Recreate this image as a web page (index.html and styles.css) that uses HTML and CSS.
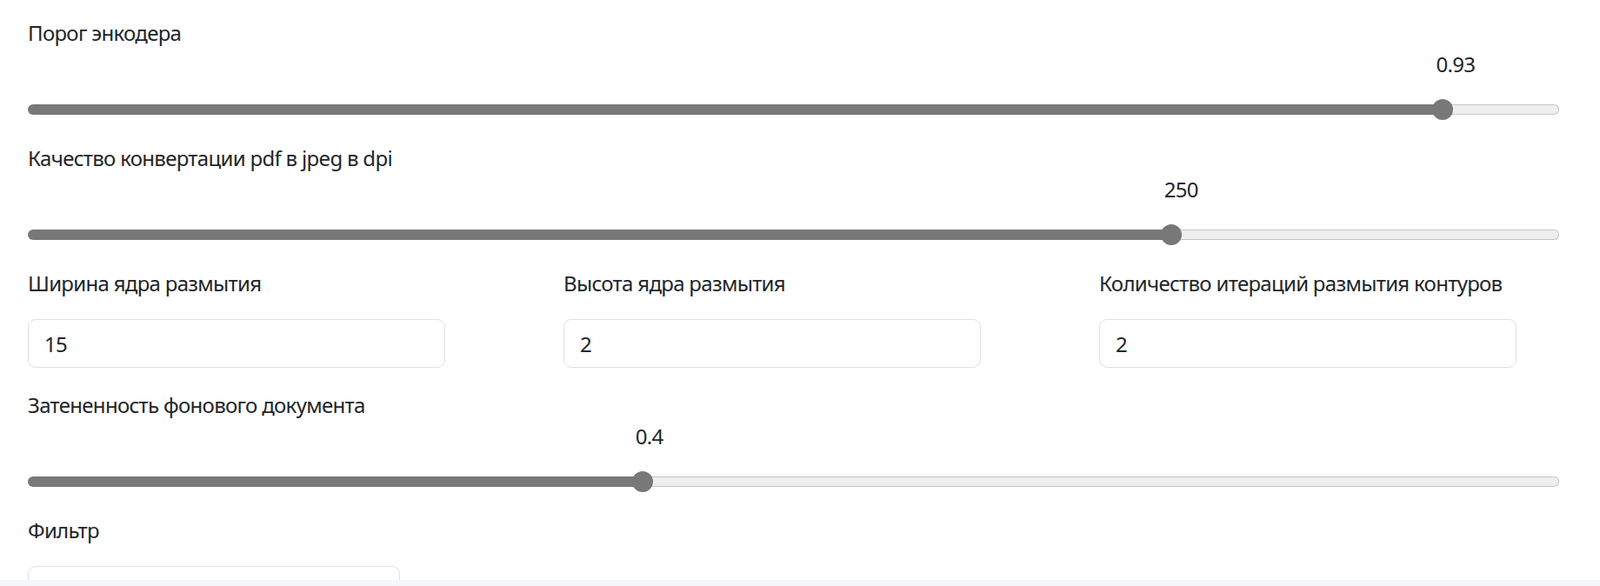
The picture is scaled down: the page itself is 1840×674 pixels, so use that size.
FILE: index.html
```html
<!DOCTYPE html>
<html lang="ru">
<head>
<meta charset="utf-8">
<title>Настройки</title>
<link rel="stylesheet" href="styles.css">
</head>
<body>
<div class="page">
  <main class="content">
    <div class="field field-range" style="--p:0.93">
      <label class="label">Порог энкодера</label>
      <div class="range-value">0.93</div>
      <div class="range" role="slider" aria-valuemin="0" aria-valuemax="1" aria-valuenow="0.93">
        <div class="range-fill"></div>
        <div class="range-thumb"></div>
        <div class="range-rest"></div>
      </div>
    </div>

    <div class="field field-range" style="--p:0.75">
      <label class="label">Качество конвертации pdf в jpeg в dpi</label>
      <div class="range-value">250</div>
      <div class="range" role="slider" aria-valuemin="100" aria-valuemax="300" aria-valuenow="250">
        <div class="range-fill"></div>
        <div class="range-thumb"></div>
        <div class="range-rest"></div>
      </div>
    </div>

    <div class="field field-row">
      <div class="col">
        <label class="label label-input">Ширина ядра размытия</label>
        <input class="input" type="text" value="15">
      </div>
      <div class="col">
        <label class="label label-input">Высота ядра размытия</label>
        <input class="input" type="text" value="2">
      </div>
      <div class="col">
        <label class="label label-input">Количество итераций размытия контуров</label>
        <input class="input" type="text" value="2">
      </div>
    </div>

    <div class="field field-range" style="--p:0.4">
      <label class="label">Затененность фонового документа</label>
      <div class="range-value">0.4</div>
      <div class="range" role="slider" aria-valuemin="0" aria-valuemax="1" aria-valuenow="0.4">
        <div class="range-fill"></div>
        <div class="range-thumb"></div>
        <div class="range-rest"></div>
      </div>
    </div>

    <div class="field">
      <label class="label label-input">Фильтр</label>
      <input class="input input-filter" type="text" value="">
    </div>
  </main>
  <div class="bottom-strip"></div>
</div>
</body>
</html>
```

FILE: styles.css
```css
* {
  box-sizing: border-box;
}

html, body {
  margin: 0;
  padding: 0;
  background: #ffffff;
}

body {
  font-family: "Noto Sans", "Open Sans", "Liberation Sans", sans-serif;
  font-size: 24px;
  letter-spacing: -0.7px;
  color: #212529;
}

.page {
  display: flex;
  flex-direction: column;
  height: 100vh;
}

.content {
  flex: 1;
  overflow: hidden;
  padding: 20px 47px 0 32px;
}

.bottom-strip {
  flex: none;
  height: 7px;
  background: #f6f7f9;
}

.label {
  display: block;
  line-height: 36px;
  white-space: nowrap;
}

.label-input {
  margin-bottom: 23px;
}

.field-range {
  margin-bottom: 26px;
}

.range-value {
  line-height: 36px;
  padding-left: calc(4px + var(--p) * (100% - 24px));
  margin-bottom: 22px;
}

.range {
  display: flex;
  align-items: center;
  height: 24px;
}

.range-fill {
  flex: none;
  width: calc(12px + var(--p) * (100% - 24px));
  height: 12px;
  background: #787878;
  border-radius: 6px 0 0 6px;
}

.range-thumb {
  flex: none;
  position: relative;
  z-index: 1;
  width: 24px;
  height: 24px;
  margin: 0 -12px;
  border-radius: 50%;
  background: #787878;
}

.range-rest {
  flex: 1;
  height: 12px;
  background: #eeeeee;
  border: 1px solid #c4c4c4;
  border-left: none;
  border-radius: 0 6px 6px 0;
}

.field-row {
  display: grid;
  grid-template-columns: 616px 616px 1fr;
  margin-bottom: 25px;
}

.input {
  display: block;
  width: 480px;
  height: 56px;
  padding: 9px 18px;
  font-family: inherit;
  font-size: 24px;
  letter-spacing: -0.7px;
  line-height: 36px;
  color: #212529;
  background: #ffffff;
  border: 1px solid #dee2e6;
  border-radius: 9px;
  outline: none;
}

.input-filter {
  width: 428px;
}
```
